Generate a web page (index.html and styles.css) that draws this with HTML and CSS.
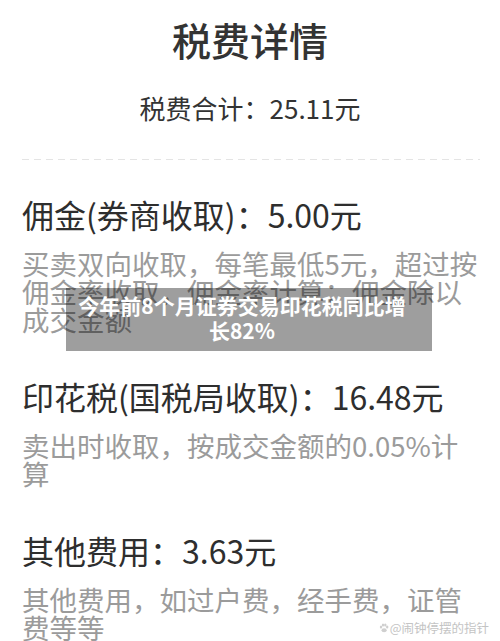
FILE: index.html
```html
<!DOCTYPE html>
<html lang="zh-CN">
<head>
  <meta charset="UTF-8">
  <meta name="viewport" content="width=device-width, initial-scale=1.0">
  <title>税费详情</title>
  <link rel="stylesheet" href="styles.css">
</head>
<body>

  <div class="page">
    <h1 class="title">税费详情</h1>
    <p class="total">税费合计：25.11元</p>
    <div class="divider"></div>

    <div class="item">
      <div class="item-name">佣金(券商收取)：5.00元</div>
      <div class="item-desc">买卖双向收取，每笔最低5元，超过按佣金率收取，佣金率计算：佣金除以成交金额</div>
    </div>

    <div class="item">
      <div class="item-name">印花税(国税局收取)：16.48元</div>
      <div class="item-desc">卖出时收取，按成交金额的0.05%计算</div>
    </div>

    <div class="item">
      <div class="item-name">其他费用：3.63元</div>
      <div class="item-desc">其他费用，如过户费，经手费，证管费等等</div>
    </div>
  </div>

  <!-- 新闻标题横幅 -->
  <div class="banner">今年前8个月证券交易印花税同比增长82%</div>

  <!-- 水印 -->
  <div class="watermark">
    <svg class="paw" width="10" height="10" viewBox="0 0 10 10">
      <ellipse cx="2" cy="4" rx="1.2" ry="1.5"/>
      <ellipse cx="4" cy="2" rx="1.2" ry="1.5"/>
      <ellipse cx="6.3" cy="2" rx="1.2" ry="1.5"/>
      <ellipse cx="8.2" cy="4" rx="1.2" ry="1.5"/>
      <ellipse cx="5.1" cy="7.2" rx="2.6" ry="2"/>
    </svg>
    <span>@闹钟停摆的指针</span>
  </div>

</body>
</html>
```

FILE: styles.css
```css
body {
  margin: 0;
  background: #fff;
  font-family: "Noto Sans CJK SC", "Noto Sans", sans-serif;
  color: #2e2e2e;
}
.page {
  width: 500px;
}
.title {
  margin: 20px 0 0;
  font-size: 39px;
  line-height: 39px;
  font-weight: 500;
  text-align: center;
  color: #333;
}
.total {
  margin: 36px 0 0;
  font-size: 26px;
  line-height: 26px;
  text-align: center;
  color: #333;
}
.divider {
  margin: 38px 20px 0 22px;
  height: 1px;
  background-image: linear-gradient(to right, #e4e4e4 7px, transparent 7px);
  background-size: 12px 1px;
}
.item {
  padding: 0 20px 0 22px;
  margin-top: 43px;
}
.divider + .item {
  margin-top: 34px;
}
.item-name {
  font-size: 32px;
  line-height: 40px;
}
.item-desc {
  margin-top: 15px;
  font-size: 27.5px;
  line-height: 28px;
  color: #9b9b9b;
}

/* faixa cinza sobre o conteúdo */
.banner {
  position: absolute;
  top: 288px;
  left: 66px;
  width: 338px;
  padding: 5px 21px 8px 7px;
  background: rgba(0, 0, 0, 0.38);
  color: #fff;
  font-size: 21px;
  line-height: 25px;
  font-weight: 700;
  text-align: center;
}
.watermark {
  position: absolute;
  right: 11px;
  bottom: 7px;
  display: flex;
  align-items: center;
  gap: 1px;
  font-size: 12.5px;
  line-height: 13px;
  color: #c4c4c4;
}
.paw {
  fill: #cfcfcf;
}
```
